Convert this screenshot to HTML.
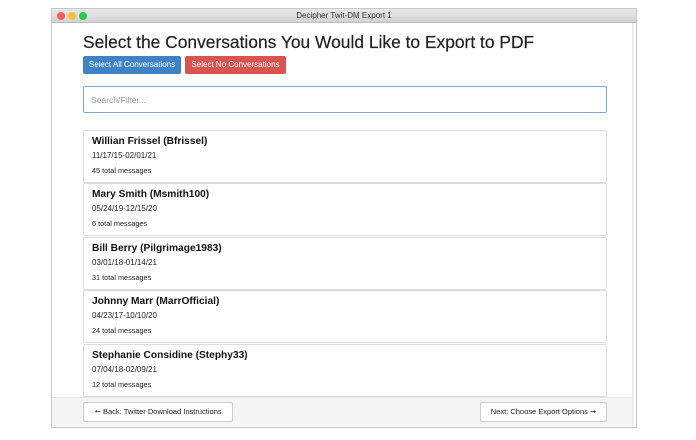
<!DOCTYPE html>
<html><head><style>
*{box-sizing:border-box;margin:0;padding:0}
body{width:696px;height:440px;background:#fff;font-family:"Liberation Sans",sans-serif;position:relative;overflow:hidden}
.win{position:absolute;left:51px;top:8px;width:586px;height:420px;border:1px solid #c8c8c8;background:#fff;overflow:hidden}
.tb{height:14px;background:linear-gradient(#e8e8e8,#d3d3d3);border-bottom:1px solid #bcbcbc;font-size:8px;text-align:center;line-height:14px;color:#333;position:relative}
.dot{position:absolute;top:3px;width:8px;height:8px;border-radius:50%}
.content{position:absolute;left:0;top:14px;right:3px;bottom:0;border-right:1px solid #e4e4e4}
h1{position:absolute;left:31px;top:9px;font-size:17.4px;font-weight:normal;color:#222;white-space:nowrap;-webkit-text-stroke:0.2px #222}
.btn{position:absolute;top:33px;height:18px;border-radius:2px;font-size:8px;color:#fff;line-height:18px;text-align:center}
.search{position:absolute;left:31px;top:63px;width:524px;height:27px;border:1px solid #7fa6cf;border-radius:2px;font-size:8.5px;color:#999;padding:8px 7px}
.card{position:absolute;left:31px;width:524px;height:53px;border:1px solid #ddd;border-radius:2px;padding:5px 8px}
.card b{display:block;font-size:10.2px;color:#111}
.card .d{font-size:8px;color:#222;margin-top:4px}
.card .m{font-size:7.3px;color:#222;margin-top:6px}
.foot{position:absolute;left:0;right:0;top:374px;bottom:0;background:#f5f5f5;border-top:1px solid #e6e6e6}
.fb{position:absolute;top:4px;height:20px;border:1px solid #ccc;border-radius:2px;background:#fff;font-size:7.5px;line-height:18px;text-align:center;color:#222}
</style></head><body>
<div class="win">
<div class="tb"><span class="dot" style="left:5px;background:#fc605c"></span><span class="dot" style="left:16px;background:#fdbc40"></span><span class="dot" style="left:27px;background:#34c84a"></span>Decipher Twit-DM Export 1</div>
<div class="content">
<h1>Select the Conversations You Would Like to Export to PDF</h1>
<div class="btn" style="left:31px;width:98px;background:#3f83c5">Select All Conversations</div>
<div class="btn" style="left:133px;width:101px;background:#d9534f">Select No Conversations</div>
<div class="search">Search/Filter...</div>
<div class="card" style="top:107px"><b>Willian Frissel (Bfrissel)</b><div class="d">11/17/15-02/01/21</div><div class="m">45 total messages</div></div>
<div class="card" style="top:160px"><b>Mary Smith (Msmith100)</b><div class="d">05/24/19-12/15/20</div><div class="m">6 total messages</div></div>
<div class="card" style="top:214px"><b>Bill Berry (Pilgrimage1983)</b><div class="d">03/01/18-01/14/21</div><div class="m">31 total messages</div></div>
<div class="card" style="top:267px"><b>Johnny Marr (MarrOfficial)</b><div class="d">04/23/17-10/10/20</div><div class="m">24 total messages</div></div>
<div class="card" style="top:321px"><b>Stephanie Considine (Stephy33)</b><div class="d">07/04/18-02/09/21</div><div class="m">12 total messages</div></div>
<div class="foot">
<div class="fb" style="left:31px;width:150px">&#129044; Back: Twitter Download Instructions</div>
<div class="fb" style="left:428px;width:127px">Next: Choose Export Options &#10142;</div>
</div>
</div>
</div>
</body></html>
